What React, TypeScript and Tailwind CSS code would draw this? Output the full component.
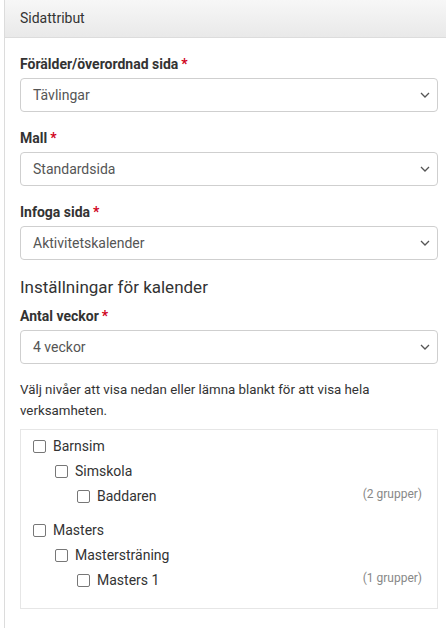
import React from "react";

const Req = () => <span className="text-[#d0021b] ml-[3px]">*</span>;

const Chevron = () => (
  <svg width="10" height="6" viewBox="0 0 10 6" className="absolute right-[7px] top-1/2 -translate-y-1/2">
    <path d="M1 1l4 4 4-4" fill="none" stroke="#555" strokeWidth="1.3" />
  </svg>
);

const Select = ({ value }: { value: string }) => (
  <div className="relative h-[34px] border border-[#cfcfcf] rounded-[4px] bg-white flex items-center pl-[12px] text-[14px] text-[#555]">
    {value}
    <Chevron />
  </div>
);

const Group = ({ label, value }: { label: string; value: string }) => (
  <div className="mb-[16px]">
    <div className="h-[20px] leading-[20px] font-bold text-[14px] text-[#333] mb-[4px]">
      {label}
      <Req />
    </div>
    <Select value={value} />
  </div>
);

const Row = ({ level, label, count }: { level: number; label: string; count?: string }) => (
  <div className="h-[25px] flex items-center" style={{ paddingLeft: level * 22 }}>
    <span className="w-[13px] h-[13px] border-[1.5px] border-[#777] rounded-[2px] bg-white shrink-0" />
    <span className="ml-[7px] text-[14px] text-[#333]">{label}</span>
    {count && <span className="ml-auto text-[12px] text-[#888] -mt-[6px]">{count}</span>}
  </div>
);

export default function App() {
  return (
    <div className="w-[446px] h-[628px] bg-white overflow-hidden" style={{ fontFamily: "Roboto, 'Open Sans', sans-serif" }}>
      <div className="ml-[4px] border-l border-[#dcdcdc] h-full">
        <div className="h-[38px] border-b border-[#dcdcdc] bg-gradient-to-b from-[#f7f7f7] to-[#e9e9e9] flex items-center pl-[15px] text-[14px] text-[#333]">
          Sidattribut
        </div>
        <div className="pt-[16px] pl-[15px] pr-[8px]">
          <Group label="Förälder/överordnad sida" value="Tävlingar" />
          <Group label="Mall" value="Standardsida" />
          <Group label="Infoga sida" value="Aktivitetskalender" />
          <div className="text-[17px] leading-[22px] text-[#333] mb-[8px]">Inställningar för kalender</div>
          <Group label="Antal veckor" value="4 veckor" />
          <p className="text-[13.3px] leading-[21px] text-[#333] -mt-[1px] mb-[8px]">
            Välj nivåer att visa nedan eller lämna blankt för att visa hela verksamheten.
          </p>
          <div className="border border-[#e6e6e6] pl-[12px] pr-[15px] pt-[4px] pb-[15px]">
            <Row level={0} label="Barnsim" />
            <Row level={1} label="Simskola" />
            <Row level={2} label="Baddaren" count="(2 grupper)" />
            <div className="h-[9px]" />
            <Row level={0} label="Masters" />
            <Row level={1} label="Mastersträning" />
            <Row level={2} label="Masters 1" count="(1 grupper)" />
          </div>
        </div>
      </div>
    </div>
  );
}
